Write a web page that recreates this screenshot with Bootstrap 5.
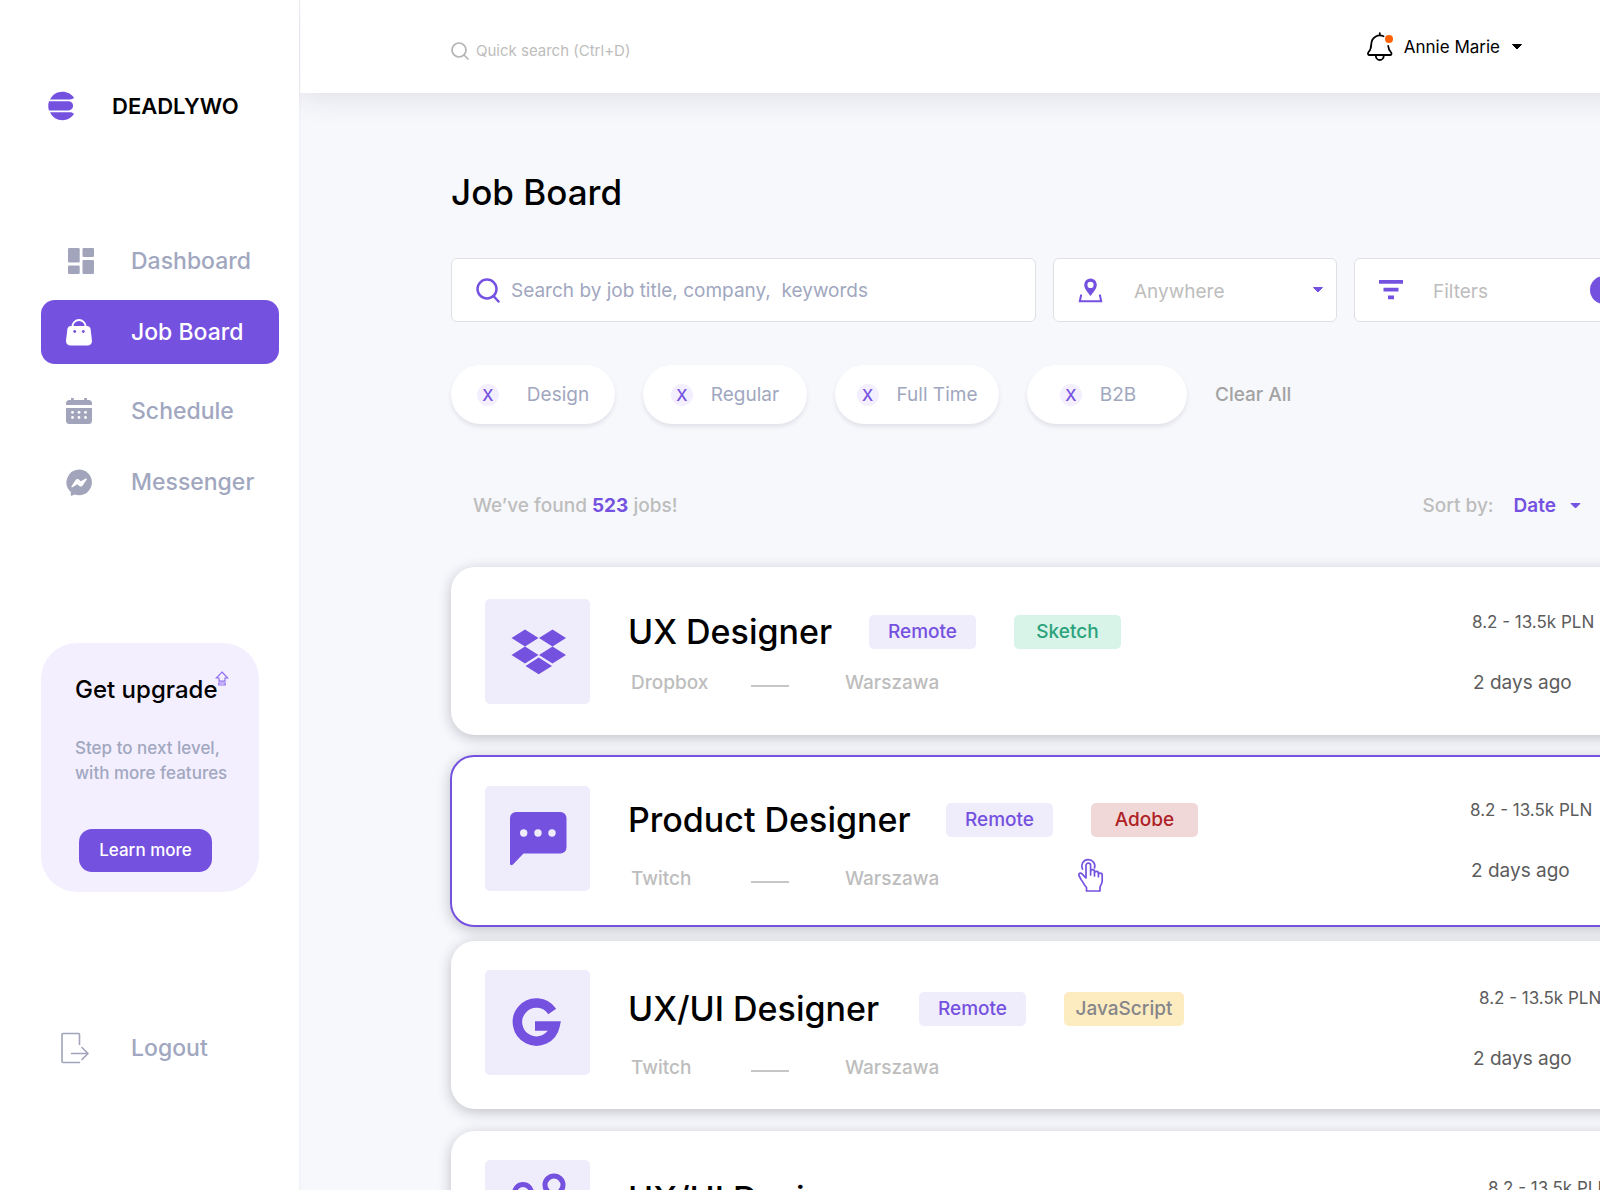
<!DOCTYPE html>
<html lang="en">
<head>
<meta charset="utf-8">
<meta name="viewport" content="width=device-width, initial-scale=1">
<title>Job Board</title>
<link href="https://cdn.jsdelivr.net/npm/bootstrap@5.3.0/dist/css/bootstrap.min.css" rel="stylesheet">
<style>
:root { --violet: #7551e0; --mist: #a1a7bf; --silver: #bdbdbd; --lilac: #efecfb; }
body { font-family: Inter, "Open Sans", sans-serif; color: #000; background: #f7f8fc; font-size: 19px; line-height: 28px; }
a { text-decoration: none; }
svg { display: block; flex: none; }
.shell { height: 100vh; overflow: hidden; }

.side-bar { width: 299px; padding: 90px 20px 0 41px; box-shadow: 0 0 3px rgba(60, 50, 110, .08); z-index: 2; }
.brand-row { gap: 36px; padding-left: 7px; height: 32px; font-size: 22px; font-weight: 600; color: #000; }
.side-nav { margin-top: 107px; gap: 7px; }
.side-link { height: 64px; padding-left: 25px; border-radius: 14px; gap: 39px; font-size: 23px; font-weight: 500; color: var(--mist); }
.side-link.current { background: var(--violet); color: #fff; margin-bottom: 8px; }
.side-link.grid-link { padding-left: 27px; gap: 37px; }
.side-link.exit-link { padding-left: 20px; gap: 42px; margin-top: 124px; }
.upgrade { margin: 129px 20px 0 0; height: 249px; border-radius: 36px; background: #f3effe; padding: 33px 0 0 34px; }
.upgrade h2 { font-size: 24px; line-height: 28px; font-weight: 500; margin: 0; }
.upgrade h2 svg { position: absolute; left: 140px; top: -5px; }
.upgrade p { font-size: 17px; line-height: 25px; font-weight: 500; color: var(--mist); margin: 32px 0 0; }
.learn { margin: 43px 0 0 4px; width: 133px; height: 43px; border-radius: 13px; background: var(--violet); color: #fff; font-size: 17px; font-weight: 500; padding: 0; }
.learn:hover { background: #6743d3; color: #fff; }

.top-bar { height: 93px; background: #fff; padding: 0 117px 0 151px; box-shadow: 0 4px 28px rgba(40, 30, 60, .12); margin: 0 -40px 0 1px; z-index: 1; }
.quick { border: 0; outline: 0; background: none; font-size: 15px; width: 220px; color: #555; padding: 0; margin-left: 7px; }
.quick::placeholder { color: var(--silver); opacity: 1; }
.account { font-size: 17px; padding: 0; border: 0; background: none; color: #000; gap: 11px; }

.board { padding-left: 152px; margin-right: -38px; }
.board h1 { font-size: 35px; line-height: 44px; font-weight: 500; margin: 77px 0 0; }
.controls { margin-top: 44px; gap: 17px; }
.control-box { height: 64px; background: #fff; border: 1px solid #dfe0e3; border-radius: 6px; padding: 0 0 0 24px; }
.control-box.slim { width: 284px; flex: none; }
.control-box input, .control-box select { border: 0; outline: 0; background: none; appearance: none; padding: 0; flex: 1; min-width: 0; height: 60px; }
.control-box input { color: #444; margin-left: 10px; }
.control-box input::placeholder { color: var(--mist); opacity: 1; }
.control-box select { color: var(--silver); margin-left: 31px; }
.filter-name { color: var(--silver); margin-left: 30px; flex: 1; text-align: left; }
.filter-count { width: 28px; height: 28px; border-radius: 50%; background: var(--violet); color: #fff; font-size: 16px; margin-right: 19px; text-align: center; }

.chips { margin-top: 43px; gap: 28px; }
.chip { width: 164px; height: 59px; border: 0; border-radius: 30px; background: #fff; box-shadow: 0 3px 4px rgba(50, 40, 80, .1); color: var(--mist); font-size: 19px; gap: 18px; padding: 0; }
.chip.airy { gap: 28px; }
.chip.short { width: 160px; padding-right: 18px; }
.chip-x { width: 22px; height: 22px; border-radius: 50%; background: #f3effe; color: var(--violet); font-size: 16px; line-height: 22px; font-weight: 500; }
.clear { border: 0; background: none; padding: 0; color: #a3a3a3; font-weight: 500; }

.summary { margin-top: 68px; padding: 0 57px 0 22px; color: var(--silver); font-weight: 500; }
.summary strong { color: var(--violet); font-weight: 700; }
.sort-pick { border: 0; background: none; padding: 0; color: var(--violet); font-weight: 600; gap: 14px; margin-left: 20px; }

.jobs { margin-top: 47px; gap: 22px; }
.job { height: 168px; margin-right: -24px; border-radius: 24px; background: #fff; box-shadow: 0 3px 14px rgba(20, 20, 40, .24); padding: 0 0 0 34px; }
.job.picked { height: 172px; border: 2px solid var(--violet); margin: -2px -24px -8px -1px; padding-left: 33px; }
.tile { width: 105px; height: 105px; border-radius: 5px; background: var(--lilac); margin-top: 32px; overflow: hidden; }
.low .tile, .job.picked .tile { margin-top: 29px; }
.job-text { margin-left: 38px; padding-top: 42px; }
.low .job-text { padding-top: 45px; }
.job.picked .job-text { padding-top: 40px; }
.job h2 { font-size: 34px; line-height: 46px; font-weight: 500; margin: 0; }
.job h2.w-ux { width: 241px; }
.job h2.w-product { width: 318px; }
.job h2.w-uxui { width: 291px; }
.tag { width: 107px; height: 34px; border-radius: 5px; text-align: center; line-height: 34px; font-weight: 500; margin: 0 38px 1px 0; }
.tag-remote { background: var(--lilac); color: var(--violet); }
.tag-sketch { background: #d8f3e7; color: #2ba37c; }
.tag-adobe { background: #f1d8d8; color: #ae2125; }
.tag-script { background: #fdecc0; color: #85858a; width: 120px; }
.where { margin: 14px 0 0 3px; color: var(--silver); font-weight: 500; }
.low .where, .job.picked .where { margin-top: 22px; }
.where span:first-child { width: 120px; }
.where i { width: 38px; height: 2px; background: #c6c6c6; margin: 5px 56px 0 0; }
.pay { width: 190px; margin-left: auto; padding-top: 41px; color: #5c5c5c; }
.pay div:first-child { font-size: 17px; }
.pay div + div { margin-top: 33px; padding-left: 1px; }
.low .pay { padding-top: 43px; }
.job.picked .pay { padding-top: 39px; }
.indent { padding-left: 7px; }
.hand { position: absolute; left: 625px; top: 101px; }
</style>
<script src="https://cdn.jsdelivr.net/npm/bootstrap@5.3.0/dist/js/bootstrap.bundle.min.js"></script>
</head>
<body>
<div class="shell d-flex">
  <aside class="side-bar bg-white d-flex flex-column flex-shrink-0 position-relative">
    <a href="#" class="brand-row d-flex align-items-center">
      <svg width="28" height="30" viewBox="0 0 28 30" fill="#7551e0"><path d="M2 8.500C4.500 3.500 9 .8 14.500.8c4.700 0 9 2.200 11.500 6-1 1.300-2.500 1.700-4 1.700z"/><path d="M1 10.200h19.500a4.600 4.600 0 0 1 0 9.200H1C0 16.300 0 13.300 1 10.200z"/><path d="M2 21.200h20c1.500 0 3 .5 4 1.600-2.500 4-6.800 6.400-11.500 6.400C9 29.200 4.500 26.300 2 21.200z"/></svg>
      <span>DEADLYWO</span>
    </a>
    <nav class="side-nav d-flex flex-column">
      <a href="#" class="side-link grid-link d-flex align-items-center">
        <svg width="26" height="26" viewBox="0 0 26 26" fill="#a1a4ba"><rect width="11.700" height="14.500" rx="1.200"/><rect x="14.500" width="11.500" height="9" rx="1.200"/><rect y="17.500" width="11.700" height="8.500" rx="1.200"/><rect x="14.500" y="12" width="11.500" height="14" rx="1.200"/></svg>
        <span>Dashboard</span></a>
      <a href="#" class="side-link current d-flex align-items-center">
        <svg width="26" height="27" viewBox="0 0 26 27"><path d="M6.500 9V7.500a6.500 6.500 0 0 1 13 0V9" fill="none" stroke="#fff" stroke-width="1.800"/><path d="M5 7h16c2 0 3.200 1 3.600 3l1.300 11c.4 3.500-1.300 5.500-4.500 5.500H4.600C1.400 26.500-.3 24.500.1 21l1.300-11C1.800 8 3 7 5 7z" fill="#fff"/><circle cx="8.700" cy="12.500" r="1.400" fill="#7551e0"/><circle cx="17.300" cy="12.500" r="1.400" fill="#7551e0"/></svg>
        <span>Job Board</span></a>
      <a href="#" class="side-link d-flex align-items-center">
        <svg width="26" height="26" viewBox="0 0 26 26" fill="#a1a4ba"><path d="M0 7V5.500a3.500 3.500 0 0 1 3.500-3.500H5V.8a1.300 1.300 0 0 1 2.800 0V2h10.400V.8a1.300 1.300 0 0 1 2.800 0V2h1.500A3.500 3.500 0 0 1 26 5.500V7z"/><path d="M0 10h26v12.500a3.500 3.500 0 0 1-3.500 3.500h-19A3.500 3.500 0 0 1 0 22.500z"/><g fill="#fff"><circle cx="6.500" cy="14.300" r="1.400"/><circle cx="13" cy="14.300" r="1.400"/><circle cx="19.500" cy="14.300" r="1.400"/><circle cx="6.500" cy="19.500" r="1.400"/><circle cx="13" cy="19.500" r="1.400"/><circle cx="19.500" cy="19.500" r="1.400"/></g></svg>
        <span>Schedule</span></a>
      <a href="#" class="side-link d-flex align-items-center">
        <svg width="26" height="27" viewBox="0 0 26 27"><path d="M13 .4a12.900 12.900 0 1 1 0 25.800c-1.500 0-3-.3-4.300-.8l-3 1.300c-.5.200-.9 0-.9-.6v-3.200A12.900 12.900 0 0 1 13 .4z" fill="#a1a4ba"/><path d="M5.500 17.300l4.300-6.500c.7-1 1.900-1.200 2.800-.5l2.300 1.900 4.700-2.600c.8-.4 1.500.3 1 1.100l-4.100 6c-.7 1-2 1.200-2.900.5l-2.400-1.900-4.700 2.900c-.8.500-1.500-.2-1-.9z" fill="#fff"/></svg>
        <span>Messenger</span></a>
    </nav>
    <section class="upgrade">
      <h2 class="position-relative">Get upgrade
        <svg width="14" height="15" viewBox="0 0 14 15" fill="none" stroke="#8f6ff0" stroke-width="1.200"><path d="M7 1l5.700 6H10v3.200H4V7H1.300z"/><path d="M3.800 12h6.400v2H3.800z"/></svg></h2>
      <p>Step to next level,<br>with more features</p>
      <button type="button" class="learn btn">Learn more</button>
    </section>
    <a href="#" class="side-link exit-link d-flex align-items-center">
      <svg width="28" height="32" viewBox="0 0 28 32" fill="none" stroke="#a1a4ba" stroke-width="1.600" stroke-linecap="round" stroke-linejoin="round"><path d="M18.500 12.500V2.500a1 1 0 0 0-1-1H2a1 1 0 0 0-1 1v27a1 1 0 0 0 1 1h16.500"/><path d="M10.500 21.500H27M21 15.500l6 6-6 6"/></svg>
      <span>Logout</span></a>
  </aside>

  <div class="flex-grow-1 d-flex flex-column overflow-hidden">
    <header class="top-bar d-flex align-items-center justify-content-between flex-shrink-0 position-relative">
      <label class="d-flex align-items-center pt-2">
        <svg width="18" height="18" viewBox="0 0 18 18" fill="none" stroke="#b5b5b5" stroke-width="1.700" stroke-linecap="round"><circle cx="8" cy="8" r="7"/><path d="M13 13l4 4"/></svg>
        <input class="quick" type="search" placeholder="Quick search (Ctrl+D)" aria-label="Quick search">
      </label>
      <button type="button" class="account d-flex align-items-center">
        <svg width="26" height="30" viewBox="0 0 26 30" fill="none" stroke="#000" stroke-width="1.800" stroke-linecap="round" stroke-linejoin="round"><path d="M16.500 4.200C11 1.800 4.500 5.500 4.300 12c-.1 4.300-.6 6-3 8.500-.6.700-.3 2.500.7 2.500h21.500c1 0 1.300-1.700.6-2.500-2-2.300-2.700-3.500-2.900-6.500M12.800 1.200v2"/><path d="M8.800 23.500a4 4.500 0 0 0 8 0"/><circle cx="22" cy="7" r="4" fill="#ff6206" stroke="none"/></svg>
        <span>Annie Marie</span>
        <svg width="12" height="6" viewBox="0 0 12 6"><path d="M1.500 .5h9L6 5z" stroke="#000" stroke-linejoin="round"/></svg>
      </button>
    </header>

    <main class="board">
      <h1>Job Board</h1>
      <form class="controls d-flex">
        <label class="control-box d-flex align-items-center flex-grow-1">
          <svg width="25" height="25" viewBox="0 0 25 25" fill="none" stroke="#7551e0" stroke-width="2.500" stroke-linecap="round"><circle cx="11" cy="11" r="9.500"/><path d="M17.500 18l5 5.500"/></svg>
          <input type="text" placeholder="Search by job title, company,  keywords" aria-label="Search jobs">
        </label>
        <label class="control-box slim d-flex align-items-center">
          <svg width="25" height="25" viewBox="0 0 25 25"><path fill-rule="evenodd" fill="#7551e0" d="M12.500.5a6.300 6.300 0 0 1 6.300 6.300c0 4-3.800 7.700-6.300 11.200C10 14.500 6.200 10.800 6.200 6.800A6.300 6.300 0 0 1 12.500.5zm0 3.300a3 3 0 1 0 0 6.200 3 3 0 0 0 0-6.200z"/><path d="M4 17.500H3l-1.200 5.800h21.400L22 17.500h-1" fill="none" stroke="#7551e0" stroke-width="2"/></svg>
          <select class="pt-1" aria-label="Location"><option>Anywhere</option></select>
          <svg class="me-2" width="16" height="6" viewBox="0 0 16 6"><path d="M1.500 .5h9L6 5z" fill="#7551e0" stroke="#7551e0" stroke-linejoin="round"/></svg>
        </label>
        <button type="button" class="control-box slim d-flex align-items-center">
          <svg width="24" height="20" viewBox="0 0 24 20" fill="#7551e0"><path d="M0 0h24v3.700H0zM4.500 7.700h15v3.700h-15zM9 15.500h6v3.700H9z"/></svg>
          <span class="filter-name pt-1">Filters</span>
          <span class="filter-count">2</span>
        </button>
      </form>

      <div class="chips d-flex align-items-center">
        <button type="button" class="chip airy d-flex align-items-center justify-content-center"><span class="chip-x">X</span><span>Design</span></button>
        <button type="button" class="chip d-flex align-items-center justify-content-center"><span class="chip-x">X</span><span>Regular</span></button>
        <button type="button" class="chip d-flex align-items-center justify-content-center"><span class="chip-x">X</span><span>Full Time</span></button>
        <button type="button" class="chip short d-flex align-items-center justify-content-center"><span class="chip-x">X</span><span>B2B</span></button>
        <button type="button" class="clear">Clear All</button>
      </div>

      <div class="summary d-flex align-items-center justify-content-between">
        <div>We’ve found <strong>523</strong> jobs!</div>
        <div class="d-flex align-items-center"><span>Sort by:</span>
          <button type="button" class="sort-pick d-flex align-items-center"><span>Date</span>
            <svg width="11" height="6" viewBox="0 0 11 6"><path d="M1 .5h9L5.500 5z" fill="#7551e0" stroke="#7551e0" stroke-linejoin="round"/></svg></button></div>
      </div>

      <div class="jobs d-flex flex-column">
        <article class="job d-flex align-items-start">
          <svg class="tile" viewBox="0 0 105 105" fill="#7551e0"><path d="M40 30.500l13.500 8.500L40 47.500 26.500 39zM67.500 30.500L81 39l-13.500 8.500L54 39zM40 47.500L53.500 56 40 64.500 26.500 56zM67.500 47.500L81 56l-13.500 8.500L54 56zM53.700 58.500L67 67l-13.300 8.300L40.500 67z"/></svg>
          <div class="job-text">
            <div class="d-flex align-items-center"><h2 class="w-ux">UX Designer</h2><span class="tag tag-remote">Remote</span><span class="tag tag-sketch">Sketch</span></div>
            <div class="where d-flex align-items-center"><span>Dropbox</span><i></i><span>Warszawa</span></div>
          </div>
          <div class="pay"><div>8.2 - 13.5k PLN</div><div>2 days ago</div></div>
        </article>

        <article class="job picked d-flex align-items-start position-relative">
          <svg class="tile" viewBox="0 0 105 105"><path d="M31 26h44.500a6 6 0 0 1 6 6v29.500a6 6 0 0 1-6 6H38.500L28 78.500c-1.500 1.500-3 .5-3-1V32a6 6 0 0 1 6-6z" fill="#7551e0"/><g fill="#efecfb"><circle cx="38.700" cy="47" r="3.700"/><circle cx="53" cy="47" r="3.700"/><circle cx="67" cy="47" r="3.700"/></g></svg>
          <div class="job-text">
            <div class="d-flex align-items-center"><h2 class="w-product">Product Designer</h2><span class="tag tag-remote">Remote</span><span class="tag tag-adobe">Adobe</span></div>
            <div class="where d-flex align-items-center"><span>Twitch</span><i></i><span>Warszawa</span></div>
          </div>
          <div class="pay"><div>8.2 - 13.5k PLN</div><div>2 days ago</div></div>
          <svg class="hand" width="28" height="34" viewBox="0 0 28 34" fill="none" stroke="#7551e0" stroke-width="1.700" stroke-linecap="round" stroke-linejoin="round"><path d="M5.500 11A6.500 6.500 0 1 1 17.500 10"/><path d="M9 20V7.500a2.300 2.300 0 0 1 4.600 0V17v-3.500c0-2.500 3.900-2.500 3.900 0V18v-2.800c0-2.400 3.900-2.400 3.900 0v3.500-2c0-2.200 3.800-2.200 3.800 0v6c0 3-1.500 4.500-2.200 6.300v4H9.500v-3.500C7 27 6.500 24.500 4 21.500L2 17.500c-.8-2 1.500-3.200 3-1.700z"/></svg>
        </article>

        <article class="job low d-flex align-items-start">
          <svg class="tile" viewBox="0 0 105 105"><path d="M67.200 41.500A19 19 0 1 0 70 56H50" fill="none" stroke="#7551e0" stroke-width="9.500"/></svg>
          <div class="job-text">
            <div class="d-flex align-items-center"><h2 class="w-uxui">UX/UI Designer</h2><span class="tag tag-remote">Remote</span><span class="tag tag-script">JavaScript</span></div>
            <div class="where d-flex align-items-center"><span>Twitch</span><i></i><span>Warszawa</span></div>
          </div>
          <div class="pay"><div class="indent">8.2 - 13.5k PLN</div><div>2 days ago</div></div>
        </article>

        <article class="job low d-flex align-items-start">
          <svg class="tile" viewBox="0 0 105 105" fill="none" stroke="#7551e0" stroke-width="5"><circle cx="38" cy="33" r="8.500"/><circle cx="69" cy="25" r="9"/><circle cx="53" cy="66" r="12"/><path d="M42 41l6 14M65 33l-7 21"/></svg>
          <div class="job-text">
            <div class="d-flex align-items-center"><h2 class="w-uxui">UX/UI Designer</h2></div>
            <div class="where d-flex align-items-center"><span>Twitch</span><i></i><span>Warszawa</span></div>
          </div>
          <div class="pay"><div class="ps-3">8.2 - 13.5k PLN</div><div>2 days ago</div></div>
        </article>
      </div>
    </main>
  </div>
</div>
</body>
</html>
